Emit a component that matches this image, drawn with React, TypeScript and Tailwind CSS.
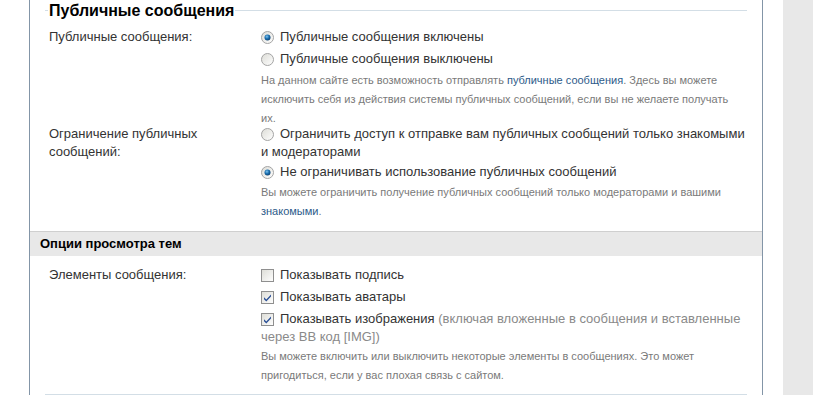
import React from "react";

const font = { fontFamily: '"Liberation Sans", Arial, sans-serif' };

function Radio({ checked }: { checked?: boolean }) {
  return (
    <svg width="13" height="13" viewBox="0 0 13 13" className="shrink-0">
      <defs>
        <linearGradient id="rg" x1="0" y1="0" x2="1" y2="1">
          <stop offset="0" stopColor="#dcdcd6" />
          <stop offset="1" stopColor="#ffffff" />
        </linearGradient>
        <radialGradient id="dot" cx="0.4" cy="0.35" r="0.7">
          <stop offset="0" stopColor="#7fc3ee" />
          <stop offset="0.5" stopColor="#1a6fb0" />
          <stop offset="1" stopColor="#0b3c6b" />
        </radialGradient>
      </defs>
      <circle cx="6.5" cy="6.5" r="6" fill="url(#rg)" stroke="#a4a4a4" strokeWidth="1" />
      {checked && <circle cx="6.5" cy="6.5" r="3" fill="url(#dot)" />}
    </svg>
  );
}

function Check({ checked }: { checked?: boolean }) {
  return (
    <svg width="13" height="13" viewBox="0 0 13 13" className="shrink-0">
      <defs>
        <linearGradient id="cg" x1="0" y1="0" x2="1" y2="1">
          <stop offset="0" stopColor="#dcdcd6" />
          <stop offset="1" stopColor="#ffffff" />
        </linearGradient>
      </defs>
      <rect x="0.5" y="0.5" width="12" height="12" fill="url(#cg)" stroke="#8f8f8f" />
      {checked && (
        <path d="M3 6.2 L5.3 8.6 L10 3.6 L10 5.6 L5.3 10.6 L3 8.2 Z" fill="#2a4f95" />
      )}
    </svg>
  );
}

function Opt({ control, children }: { control: React.ReactNode; children: React.ReactNode }) {
  return (
    <div className="flex items-start gap-[6px] text-[13px] leading-[18px] text-[#333] whitespace-nowrap">
      <div className="h-[18px] flex items-center">{control}</div>
      <div>{children}</div>
    </div>
  );
}

function Help({ children, className = "" }: { children: React.ReactNode; className?: string }) {
  return (
    <div className={"text-[11px] leading-[19px] text-[#7a7a7a] whitespace-nowrap " + className}>
      {children}
    </div>
  );
}

function Row({
  label,
  children,
  className = "",
}: {
  label: React.ReactNode;
  children: React.ReactNode;
  className?: string;
}) {
  return (
    <div className={"flex " + className}>
      <div className="w-[216px] shrink-0 pl-[4px] text-[13px] leading-[18px] text-[#333]">{label}</div>
      <div className="w-[476px] flex flex-col gap-[4px]">{children}</div>
    </div>
  );
}

const A = ({ children }: { children: React.ReactNode }) => (
  <span className="text-[#2d5b8a]">{children}</span>
);

export default function App() {
  return (
    <div className="w-[813px] h-[395px] flex bg-white overflow-hidden" style={font}>
      <div className="w-[29px] shrink-0" />
      <div className="w-[734px] shrink-0 border-l border-r border-[#8395a7] flex flex-col">
        <div className="px-[15px]">
          <div className="flex items-center h-[23px] -mt-px">
            <div className="w-[3px] h-px bg-[#d3dee6]" />
            <div className="px-px text-[16px] font-bold text-black leading-[18px]">Публичные сообщения</div>
            <div className="flex-1 h-px bg-[#d3dee6]" />
          </div>
          <div className="flex flex-col pt-[6px]">
            <Row label="Публичные сообщения:">
              <Opt control={<Radio checked />}>Публичные сообщения включены</Opt>
              <Opt control={<Radio />}>Публичные сообщения выключены</Opt>
              <Help className="-mt-[1px]">
                На данном сайте есть возможность отправлять <A>публичные сообщения</A>. Здесь вы можете
                <br />
                исключить себя из действия системы публичных сообщений, если вы не желаете получать
                <br />
                их.
              </Help>
            </Row>
            <Row
              className="-mt-[3px]"
              label={
                <>
                  Ограничение публичных
                  <br />
                  сообщений:
                </>
              }
            >
              <Opt control={<Radio />}>Ограничить доступ к отправке вам публичных сообщений только знакомыми</Opt>
              <div className="-mt-[4px] -mb-[2px] text-[13px] leading-[18px] text-[#333]">и модераторами</div>
              <Opt control={<Radio checked />}>Не ограничивать использование публичных сообщений</Opt>
              <Help className="-mt-[2px]">
                Вы можете ограничить получение публичных сообщений только модераторами и вашими
                <br />
                <A>знакомыми</A>.
              </Help>
            </Row>
          </div>
        </div>
        <div className="mt-[10px] h-[25px] shrink-0 bg-[#e8e8e8] border-t border-[#cfcfcf] flex items-center pl-[10px] text-[13px] font-bold text-black">
          Опции просмотра тем
        </div>
        <div className="px-[15px] pt-[10px]">
          <Row label="Элементы сообщения:">
            <Opt control={<Check />}>Показывать подпись</Opt>
            <Opt control={<Check checked />}>Показывать аватары</Opt>
            <Opt control={<Check checked />}>
              Показывать изображения{" "}
              <span className="text-[#8a8a8a]">(включая вложенные в сообщения и вставленные</span>
            </Opt>
            <div className="-mt-[4px] text-[13px] leading-[18px] text-[#8a8a8a]">через BB код [IMG])</div>
            <Help className="-mt-[3px]">
              Вы можете включить или выключить некоторые элементы в сообщениях. Это может
              <br />
              пригодиться, если у вас плохая связь с сайтом.
            </Help>
          </Row>
          <div className="mt-[9px] h-[2px] bg-[#d3dee6]" />
        </div>
      </div>
      <div className="w-[20px] shrink-0" />
      <div className="flex-1 bg-[#e8e8e8]" />
    </div>
  );
}
